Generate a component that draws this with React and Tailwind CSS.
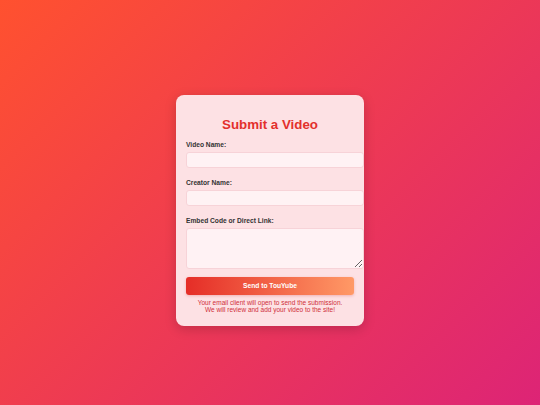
import React, { useState } from 'react';

const labelClass = "block text-[6.67px] leading-[8px] font-bold text-[#333333] mb-[3px]";
const inputClass = "block w-[178px] rounded-[3px] border border-[#f7d3d8] bg-[#fff2f4] px-[5px] text-[6.67px] text-[#333333] focus:outline-none";

export default function App() {
    const [form, setForm] = useState({ name: '', creator: '', link: '' });

    const set = (key) => (e) => setForm({ ...form, [key]: e.target.value });

    return (
        <div className="min-h-screen flex items-center justify-center pt-[16px] bg-[linear-gradient(135deg,#ff512f,#dd2476)] font-['Liberation_Sans',Arial,sans-serif]">
            <form
                onSubmit={(e) => e.preventDefault()}
                className="w-[188px] rounded-[8px] bg-[#fde1e4] px-[10px] pt-[22px] pb-[13px] shadow-[0_3px_12px_rgba(0,0,0,0.18)]"
            >
                <h2 className="text-center text-[13.3px] leading-[16px] font-bold text-[#e3302c] mb-[7.5px]">Submit a Video</h2>

                <label className={labelClass}>Video Name:</label>
                <input type="text" className={`${inputClass} h-[16px]`} value={form.name} onChange={set('name')} />

                <label className={`${labelClass} mt-[11px]`}>Creator Name:</label>
                <input type="text" className={`${inputClass} h-[16px]`} value={form.creator} onChange={set('creator')} />

                <label className={`${labelClass} mt-[11px]`}>Embed Code or Direct Link:</label>
                <textarea className={`${inputClass} h-[41px] py-[3px]`} value={form.link} onChange={set('link')} />

                <button
                    type="submit"
                    className="mt-[8px] block w-full h-[18.5px] rounded-[3px] bg-[linear-gradient(90deg,#e52d27,#ff9966)] text-white text-[6.67px] font-bold shadow-[0_1px_3px_rgba(200,40,40,0.25)]"
                >
                    Send to TouYube
                </button>

                <p className="mt-[4px] text-center text-[6.5px] leading-[7px] text-[#cf2f3a]">
                    Your email client will open to send the submission.
                    <br />
                    We will review and add your video to the site!
                </p>
            </form>
        </div>
    );
}
